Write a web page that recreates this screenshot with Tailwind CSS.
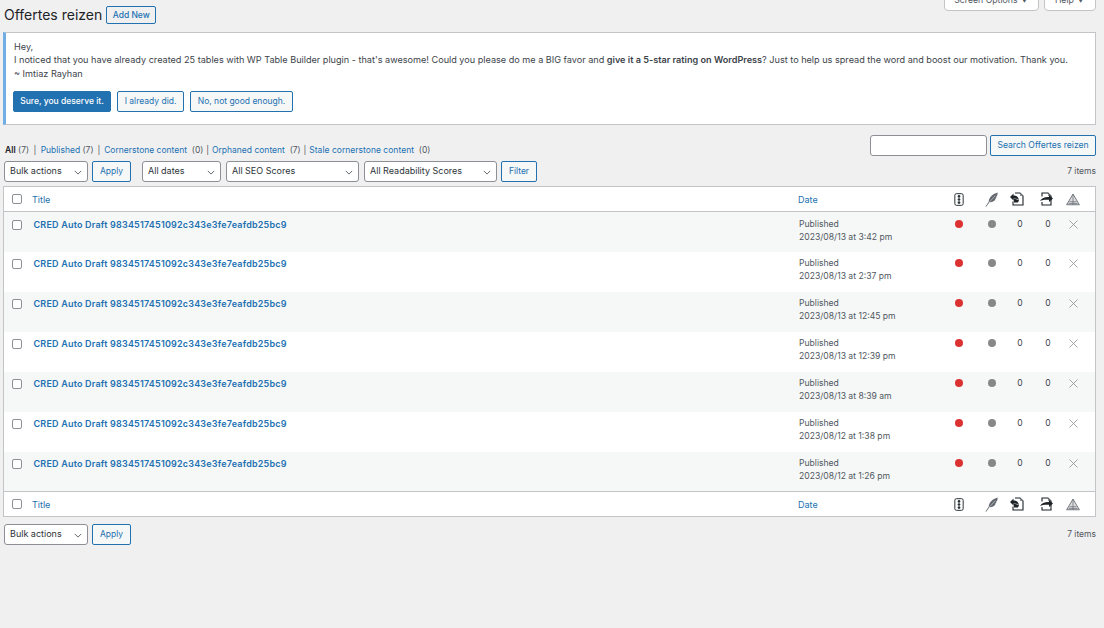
<!DOCTYPE html>
<html lang="en">
<head>
    <meta charset="UTF-8">
    <title>Offertes reizen</title>
    <script src="https://cdn.jsdelivr.net/npm/@tailwindcss/browser@4"></script>
</head>
<body class="bg-[#f0f0f1] text-[#3c434a] font-['Inter','Liberation_Sans',sans-serif] text-[9px] h-[628px] overflow-hidden">
    <svg class="hidden">
        <symbol id="chev" viewBox="0 0 10 6"><path d="M1 1l4 4 4-4" fill="none" stroke="#50575e" stroke-width="1.100"/></symbol>
        <symbol id="ic-seo" viewBox="0 0 12 16"><rect x="1" y="1" width="10" height="14" rx="2" fill="none" stroke="#2c3338" stroke-width="1.200"/><circle cx="6" cy="4.300" r="1.600" fill="#2c3338"/><circle cx="6" cy="8" r="1.600" fill="#2c3338"/><circle cx="6" cy="11.700" r="1.600" fill="#2c3338"/></symbol>
        <symbol id="ic-read" viewBox="0 0 14 16"><path d="M.5 15.500L4 10.500C4 6.500 8 2 13.500.5c.3 2.500-.5 4-1.500 4.500.5.800 0 1.800-1 2.200.3.800-.2 1.800-1.500 2.300C8 10.500 6.500 11 5 10.800L1.200 15.800z" fill="#646970"/><path d="M5 10.500L11 4" stroke="#fff" stroke-width=".5"/></symbol>
        <symbol id="ic-in" viewBox="0 0 14 14"><path d="M5 1h5l3 3v9H3V9.500" fill="none" stroke="#1d2327" stroke-width="1.100"/><path d="M10 1v3h3z" fill="#8c8f94"/><path d="M0 5l3.500-3.500v2c3 0 5 1.500 5.500 4.500-1.300-1.200-3-1.700-5.500-1.600V8.500z" fill="#1d2327"/><path d="M3.500 6.500l5.500 1.500-1 2.500H4z" fill="#1d2327"/></symbol>
        <symbol id="ic-out" viewBox="0 0 14 14"><path d="M2 4.500V1h6l3 3v9H2V10" fill="none" stroke="#1d2327" stroke-width="1.100"/><path d="M8 1v3h3z" fill="#8c8f94"/><path d="M13 6.500L9 3v2C5 4.800 1.500 6 0 9c2.500-1.200 5.500-1.500 9-1.200V10z" fill="#1d2327"/></symbol>
        <symbol id="ic-warn" viewBox="0 0 16 14"><path d="M8 .8L15.300 13H.7z" fill="#dcdcde" stroke="#646970" stroke-width="1"/><path d="M8 1v12M4 9.500h8M3 11.500h10" stroke="#646970" stroke-width=".8"/></symbol>
    </svg>

    <div class="pl-[3px] pr-2">
        <!-- screen meta tabs -->
        <div class="flex justify-end gap-[5px] h-[11px] overflow-hidden items-end">
            <div class="w-[95px] h-[20px] bg-white border border-[#c3c4c7] rounded-b flex items-center justify-center text-[8.700px] text-[#50575e] shrink-0">Screen Options ▼</div>
            <div class="w-[52px] h-[20px] bg-white border border-[#c3c4c7] rounded-b flex items-center justify-center text-[8.700px] text-[#50575e] shrink-0">Help ▼</div>
        </div>

        <!-- heading -->
        <div class="flex items-center h-[18px] mt-[-5px] pl-px">
            <h1 class="text-[14px] leading-[18px] text-[#1d2327]">Offertes reizen</h1>
            <a class="ml-[4px] w-[50px] h-[18px] border border-[#2271b1] rounded-[2px] text-[#2271b1] font-medium text-[8.500px] flex items-center justify-center">Add New</a>
        </div>

        <!-- notice -->
        <div class="mt-[8px] h-[93px] bg-white border border-[#c3c4c7] border-l-[3px] border-l-[#72aee6] pl-[8px] pt-[7px]">
            <p class="text-[9.120px] leading-[13.400px] text-[#3c434a] whitespace-nowrap">Hey,<br>I noticed that you have already created 25 tables with WP Table Builder plugin - that's awesome! Could you please do me a BIG favor and <b class="font-semibold">give it a 5-star rating on WordPress</b>? Just to help us spread the word and boost our motivation. Thank you.<br>~ Imtiaz Rayhan</p>
            <div class="flex gap-[6px] mt-[11px] -ml-px">
                <a class="w-[98px] h-[21px] bg-[#2271b1] border border-[#2271b1] rounded-[2px] text-white font-medium text-[8.500px] flex items-center justify-center">Sure, you deserve it.</a>
                <a class="w-[67px] h-[21px] bg-[#f6f7f7] border border-[#2271b1] rounded-[2px] text-[#2271b1] text-[8.500px] flex items-center justify-center">I already did.</a>
                <a class="w-[103px] h-[21px] bg-[#f6f7f7] border border-[#2271b1] rounded-[2px] text-[#2271b1] text-[8.500px] flex items-center justify-center">No, not good enough.</a>
            </div>
        </div>

        <!-- views + search -->
        <div class="flex justify-between mt-[10px] h-[26px]">
            <div class="pl-[2px] pt-[9px] leading-[12px] text-[#50575e] whitespace-nowrap text-[8.500px]">
                <b class="font-semibold text-[#1d2327]">All</b> (7) <span class="mx-[2px] text-[#50575e]">|</span> <a class="text-[#2271b1]">Published</a> (7) <span class="mx-[1.500px] text-[#50575e]">|</span> <a class="text-[#2271b1]">Cornerstone content</a> &nbsp;(0) <span class="mx-[0.500px] text-[#50575e]">|</span> <a class="text-[#2271b1]">Orphaned content</a> &nbsp;(7) <span class="mx-[0.500px] text-[#50575e]">|</span> <a class="text-[#2271b1] tracking-[0.03px]">Stale cornerstone content</a> &nbsp;(0)
            </div>
            <div class="flex gap-[3px] h-[21px]">
                <div class="w-[117px] bg-white border border-[#8c8f94] rounded-[3px]"></div>
                <a class="w-[106px] bg-[#f6f7f7] border border-[#2271b1] rounded-[2px] text-[#2271b1] text-[8.600px] flex items-center justify-center">Search Offertes reizen</a>
            </div>
        </div>

        <!-- top toolbar -->
        <div class="flex items-start h-[25px] pl-px">
            <div class="select w-[84px]" data-label="Bulk actions"></div>
            <a class="ml-[4px] w-[39px] h-[21px] bg-[#f6f7f7] border border-[#2271b1] rounded-[2px] text-[#2271b1] text-[8.500px] flex items-center justify-center">Apply</a>
            <div class="select ml-[11px] w-[79px]" data-label="All dates"></div>
            <div class="select ml-[5px] w-[133px]" data-label="All SEO Scores"></div>
            <div class="select ml-[5px] w-[133px]" data-label="All Readability Scores"></div>
            <a class="ml-[4px] w-[36px] h-[21px] bg-[#f6f7f7] border border-[#2271b1] rounded-[2px] text-[#2271b1] text-[8.500px] flex items-center justify-center">Filter</a>
            <span class="ml-auto pt-[4px] text-[8.500px] leading-[12px] text-[#50575e]">7 items</span>
        </div>

        <!-- table -->
        <div class="bg-white border border-[#c3c4c7]">
            <div id="thead" class="head h-[25px] border-b border-[#c3c4c7]"></div>
            <div id="rows"></div>
            <div id="tfoot" class="head h-[25px] border-t border-[#c3c4c7]"></div>
        </div>

        <!-- bottom toolbar -->
        <div class="flex items-start mt-[7px] pl-px">
            <div class="select w-[84px]" data-label="Bulk actions"></div>
            <a class="ml-[4px] w-[39px] h-[21px] bg-[#f6f7f7] border border-[#2271b1] rounded-[2px] text-[#2271b1] text-[8.500px] flex items-center justify-center">Apply</a>
            <span class="ml-auto pt-[4px] text-[8.500px] leading-[12px] text-[#50575e]">7 items</span>
        </div>
    </div>

    <script>
        const DATES = [
            '2023/08/13 at 3:42 pm',
            '2023/08/13 at 2:37 pm',
            '2023/08/13 at 12:45 pm',
            '2023/08/13 at 12:39 pm',
            '2023/08/13 at 8:39 am',
            '2023/08/12 at 1:38 pm',
            '2023/08/12 at 1:26 pm'
        ];

        const CHECKBOX = '<span class="block w-[10px] h-[10px] bg-white border border-[#8c8f94] rounded-[2px] shrink-0"></span>';

        // Fill in the selects
        document.querySelectorAll('.select').forEach(el => {
            el.classList.add('h-[21px]', 'bg-white', 'border', 'border-[#8c8f94]', 'rounded-[3px]', 'flex', 'items-center', 'justify-between', 'pl-[5px]', 'pr-[5px]', 'text-[9px]', 'text-[#2c3338]');
            el.innerHTML = `<span class="relative top-[-0.5px]">${el.dataset.label}</span><svg class="w-[8px] h-[5px] mt-px"><use href="#chev"/></svg>`;
        });

        // Header and footer rows share markup
        document.querySelectorAll('.head').forEach(el => {
            el.classList.add('flex', 'items-center');
            el.innerHTML = `
                <div class="w-[28px] pl-[8px] shrink-0">${CHECKBOX}</div>
                <div class="w-[766px] shrink-0 text-[#2271b1] text-[9px] pt-px">Title</div>
                <div class="w-[153px] shrink-0 text-[#2271b1] text-[9px] pt-px">Date</div>
                <div class="w-[16px] shrink-0 flex justify-center"><svg class="w-[10px] h-[15px]"><use href="#ic-seo"/></svg></div>
                <div class="w-[17px] ml-[16px] shrink-0 flex justify-center"><svg class="w-[13px] h-[15px]"><use href="#ic-read"/></svg></div>
                <div class="w-[14px] ml-[10px] shrink-0 flex justify-center"><svg class="w-[14px] h-[14px]"><use href="#ic-in"/></svg></div>
                <div class="w-[14px] ml-[16px] shrink-0 flex justify-center"><svg class="w-[14px] h-[14px]"><use href="#ic-out"/></svg></div>
                <div class="w-[14px] ml-[12px] shrink-0 flex justify-center"><svg class="w-[14px] h-[13px]"><use href="#ic-warn"/></svg></div>`;
        });

        // Post rows (first row's content sits 1px lower, last row is 1px shorter)
        document.getElementById('rows').innerHTML = DATES.map((date, i) => `
            <div class="${i === 6 ? 'h-[39px]' : 'h-[40px]'} ${i % 2 === 0 ? 'bg-[#f6f7f7]' : 'bg-white'}">
                <div class="flex items-start ${i === 0 ? '' : '-translate-y-px'}">
                    <div class="w-[28px] pl-[8px] pt-[8px] shrink-0">${CHECKBOX}</div>
                    <div class="w-[767px] pl-[1.500px] pt-[7px] shrink-0 text-[#2271b1] font-semibold text-[9px] tracking-[0.2px] leading-[12px] whitespace-nowrap">CRED Auto Draft 9834517451092c343e3fe7eafdb25bc9</div>
                    <div class="w-[152px] pt-[6px] shrink-0 text-[8.600px] leading-[13px] text-[#50575e]">Published<br>${date}</div>
                    <div class="w-[16px] pt-[8px] shrink-0 flex justify-center"><span class="w-[8px] h-[8px] rounded-full bg-[#dc3232]"></span></div>
                    <div class="w-[17px] ml-[16px] pt-[8px] shrink-0 flex justify-center"><span class="w-[8px] h-[8px] rounded-full bg-[#888]"></span></div>
                    <div class="w-[14px] ml-[13px] pt-[7px] shrink-0 text-center text-[8.500px] leading-[11px]">0</div>
                    <div class="w-[14px] ml-[14px] pt-[7px] shrink-0 text-center text-[8.500px] leading-[11px]">0</div>
                    <div class="w-[14px] ml-[11px] pt-[8px] shrink-0 flex justify-center"><svg class="w-[9px] h-[9px]" viewBox="0 0 9 9"><path d="M.5.500l8 8M8.500.500l-8 8" stroke="#8c8f94" stroke-width=".8" fill="none"/></svg></div>
                </div>
            </div>`).join('');
    </script>
</body>
</html>
